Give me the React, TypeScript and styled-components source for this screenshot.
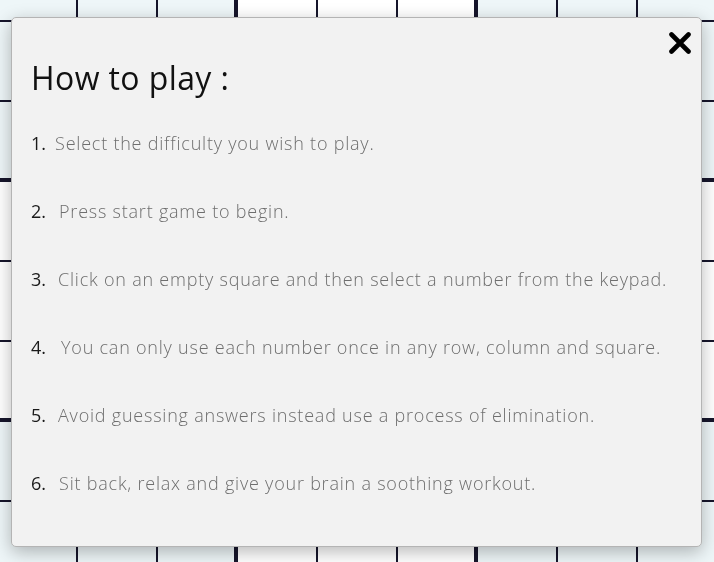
import React from "react";
import styled, { createGlobalStyle } from "styled-components";

const GlobalStyle = createGlobalStyle`
  html, body { margin: 0; padding: 0; }
  body {
    overflow: hidden;
    font-family: "Open Sans", "Liberation Sans", sans-serif;
    background: #ffffff;
  }
`;

const Page = styled.div`
  height: 100vh;
  overflow: hidden;
`;

const Board = styled.div`
  display: grid;
  grid-template-columns: repeat(3, 236px);
  grid-template-rows: repeat(3, 236px);
  gap: 4px;
  background: #16152b;
  margin: -58px 0 0 -2px;
  width: max-content;
`;

const Box = styled.div`
  display: grid;
  grid-template-columns: 78px 78px 76px;
  grid-template-rows: 78px 78px 76px;
  gap: 2px;
`;

const Cell = styled.div<{ $shaded: boolean }>`
  background: ${(p) => (p.$shaded ? "#eef6f8" : "#ffffff")};
`;

const Modal = styled.div`
  position: fixed;
  left: 11px;
  top: 17px;
  width: 691px;
  height: 530px;
  box-sizing: border-box;
  background: #f2f2f2;
  border: 1px solid #b4b4b4;
  border-radius: 5px;
  box-shadow: 0 5px 18px rgba(0, 0, 0, 0.28);
  padding: 39px 19px 0 19px;
`;

const CloseButton = styled.button`
  position: absolute;
  top: 13px;
  right: 9px;
  width: 24px;
  height: 24px;
  padding: 0;
  border: none;
  background: transparent;
  display: flex;
  align-items: center;
  justify-content: center;
  cursor: pointer;
`;

const Title = styled.h2`
  margin: 0;
  font-family: "Open Sans", sans-serif;
  font-weight: 400;
  font-size: 32px;
  line-height: 42px;
  color: #111111;
  letter-spacing: 0.4px;
`;

const Steps = styled.ol`
  list-style: none;
  margin: 32px 0 0 0;
  padding: 0;
  display: flex;
  flex-direction: column;
  gap: 44px;
`;

const Step = styled.li`
  display: flex;
  align-items: baseline;
  height: 24px;
  line-height: 24px;
  font-size: 18px;
  font-weight: 300;
  letter-spacing: 0.78px;
  color: #6e6e6e;
  white-space: nowrap;
`;

const StepNumber = styled.span<{ $gap: number }>`
  color: #1a1a1a;
  font-weight: 400;
  letter-spacing: 0;
  margin-right: ${(p) => p.$gap}px;
`;

const steps = [
  { n: "1.", gap: 9, text: "Select the difficulty you wish to play." },
  { n: "2.", gap: 13, text: "Press start game to begin." },
  { n: "3.", gap: 12, text: "Click on an empty square and then select a number from the keypad." },
  { n: "4.", gap: 15, text: "You can only use each number once in any row, column and square." },
  { n: "5.", gap: 12, text: "Avoid guessing answers instead use a process of elimination." },
  { n: "6.", gap: 13, text: "Sit back, relax and give your brain a soothing workout." },
];

export default function App() {
  const boxes = Array.from({ length: 9 }, (_, b) => b);
  return (
    <Page>
      <GlobalStyle />
      <Board>
        {boxes.map((b) => {
          const shaded = (Math.floor(b / 3) + (b % 3)) % 2 === 0;
          return (
            <Box key={b}>
              {Array.from({ length: 9 }, (_, c) => (
                <Cell key={c} $shaded={shaded} />
              ))}
            </Box>
          );
        })}
      </Board>
      <Modal>
        <CloseButton aria-label="Close">
          <svg width="24" height="22" viewBox="0 0 24 22">
            <path d="M3.5 2.5 L20.5 19.5 M20.5 2.5 L3.5 19.5" stroke="#000" strokeWidth="4.6" strokeLinecap="round" />
          </svg>
        </CloseButton>
        <Title>How to play :</Title>
        <Steps>
          {steps.map((s) => (
            <Step key={s.n}>
              <StepNumber $gap={s.gap}>{s.n}</StepNumber>
              {s.text}
            </Step>
          ))}
        </Steps>
      </Modal>
    </Page>
  );
}
